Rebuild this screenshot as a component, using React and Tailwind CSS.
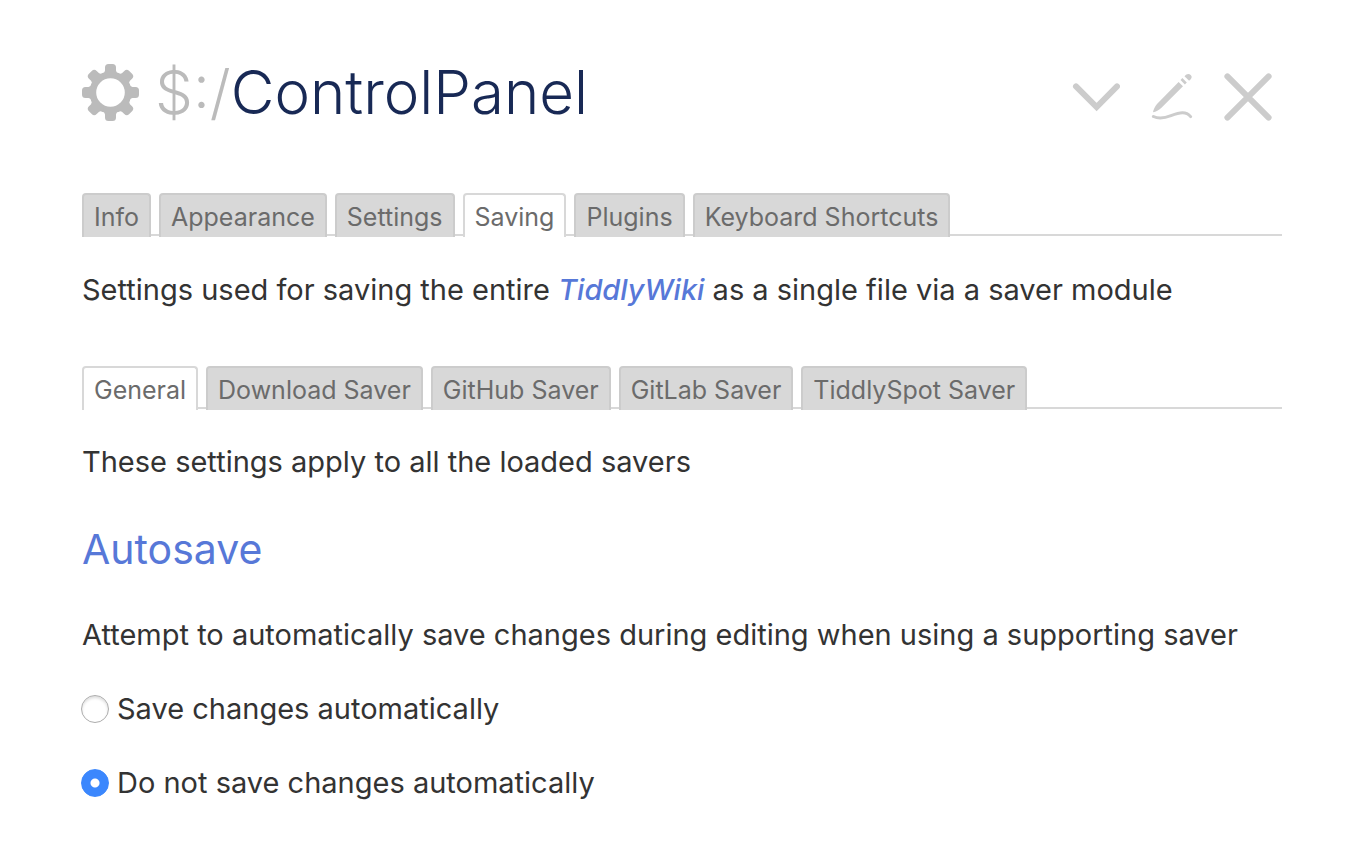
import { useState } from "react";

const MAIN_TABS = ["Info", "Appearance", "Settings", "Saving", "Plugins", "Keyboard Shortcuts"];
const SAVER_TABS = ["General", "Download Saver", "GitHub Saver", "GitLab Saver", "TiddlySpot Saver"];
const TEETH = [0, 45, 90, 135, 180, 225, 270, 315];

function GearIcon() {
  return (
    <svg className="size-[57px] shrink-0" viewBox="-28.5 -28.5 57 57" fill="#bbbbbb" aria-hidden="true">
      <circle r="17.6" fill="none" stroke="#bbbbbb" strokeWidth="6.6" />
      {TEETH.map((angle) => (
        <path
          key={angle}
          transform={`rotate(${angle})`}
          d="M-8.5 -18.8 Q-5.5 -19.8 -5.5 -22 V-25 Q-5.5 -28.5 -2 -28.5 H2 Q5.5 -28.5 5.5 -25 V-22 Q5.5 -19.8 8.5 -18.8 L5 -15.5 H-5 Z"
        />
      ))}
    </svg>
  );
}

function ChevronIcon() {
  return (
    <svg className="size-12" viewBox="0 0 48 48" fill="none" stroke="#cccccc" strokeWidth="6" strokeLinecap="round" aria-hidden="true">
      <path d="M4 13.4 24.6 34 45 13.4" />
    </svg>
  );
}

function PencilIcon() {
  return (
    <svg className="size-12" viewBox="0 0 48 48" fill="#cccccc" aria-hidden="true">
      <path d="M30.6 8.9 35 13.3 13.2 35.1 C10.8 37.5 8 38.8 5 39.3 C5.4 36.3 6.8 33.8 9 30.9 Z" />
      <path d="M32.5 7 34.4 5.1 38.8 9.5 36.9 11.4 Z" />
      <path d="M36.5 3.2 C38.6 0.6 41 0.4 42.7 2.1 C44.4 3.8 43.8 5.9 41.1 7.8 Z" />
      <path d="M5.4 43.5 C11 46.2 17 45 23 42.7 C32 39.3 38 38.2 42.6 43.6" fill="none" stroke="#cccccc" strokeWidth="3" strokeLinecap="round" />
    </svg>
  );
}

function CloseIcon() {
  return (
    <svg className="size-12" viewBox="0 0 48 48" fill="none" stroke="#cccccc" strokeWidth="6" strokeLinecap="round" aria-hidden="true">
      <path d="M3.4 3.4 44.6 44.6 M44.6 3.4 3.4 44.6" />
    </svg>
  );
}

function TabBar({ label, tabs, initial }) {
  const [selected, setSelected] = useState(initial);
  return (
    <div role="tablist" aria-label={label} className="flex h-[43px] gap-2 border-b-2 border-[#d8d8d8]">
      {tabs.map((tab) => (
        <button
          key={tab}
          type="button"
          role="tab"
          aria-selected={tab === selected}
          onClick={() => setSelected(tab)}
          className={`h-11 shrink-0 whitespace-nowrap rounded-t border-2 border-b-0 px-2.5 pt-[2px] text-[25px] leading-9 text-[#6b6b6b] ${
            tab === selected ? "border-[#d8d8d8] bg-white" : "border-[#cccccc] bg-[#d8d8d8]"
          }`}
        >
          {tab}
        </button>
      ))}
    </div>
  );
}

function Choice({ checked, onChange, children }) {
  return (
    <label className="flex items-center gap-2">
      <input
        type="radio"
        name="autosave"
        checked={checked}
        onChange={onChange}
        className="-ml-px size-7 shrink-0 appearance-none rounded-full border border-[#adadad] bg-white shadow-[inset_0_2px_3px_#dddddd] checked:border-[#3b87fd] checked:bg-[radial-gradient(circle,white_4px,#3b87fd_5px)] checked:shadow-none"
      />
      <span>{children}</span>
    </label>
  );
}

export default function App() {
  const [autosave, setAutosave] = useState(false);
  return (
    <main className="min-h-screen bg-white px-[82px] pt-14 pb-12 font-['Inter',sans-serif] text-[29px] leading-[44px] text-[#333333]">
      <header className="flex items-center justify-between">
        <h1 className="flex items-center gap-4 text-[60px] leading-[72px] font-light text-[#182955]">
          <GearIcon />
          <span>
            <span className="text-[#bbbbbb]">$:/</span>ControlPanel
          </span>
        </h1>
        <div className="flex gap-7 pt-2.5 pr-2.5">
          <button type="button" aria-label="More actions"><ChevronIcon /></button>
          <button type="button" aria-label="Edit"><PencilIcon /></button>
          <button type="button" aria-label="Close"><CloseIcon /></button>
        </div>
      </header>

      <section className="pt-[65px]">
        <TabBar label="Control panel" tabs={MAIN_TABS} initial="Saving" />
        <p className="pt-8">
          Settings used for saving the entire{" "}
          <a href="#TiddlyWiki" className="font-medium text-[#5778d8] italic">TiddlyWiki</a> as a single file via a saver module
        </p>
      </section>

      <section className="pt-[54px]">
        <TabBar label="Savers" tabs={SAVER_TABS} initial="General" />
        <p className="pt-[31px]">These settings apply to all the loaded savers</p>
        <h2 className="pt-[35px] text-[41px] leading-[60px] text-[#5778d8]">Autosave</h2>
        <p className="pt-[34px]">Attempt to automatically save changes during editing when using a supporting saver</p>
        <div className="grid gap-[30px] pt-[30px]">
          <Choice checked={autosave} onChange={() => setAutosave(true)}>Save changes automatically</Choice>
          <Choice checked={!autosave} onChange={() => setAutosave(false)}>Do not save changes automatically</Choice>
        </div>
      </section>
    </main>
  );
}
